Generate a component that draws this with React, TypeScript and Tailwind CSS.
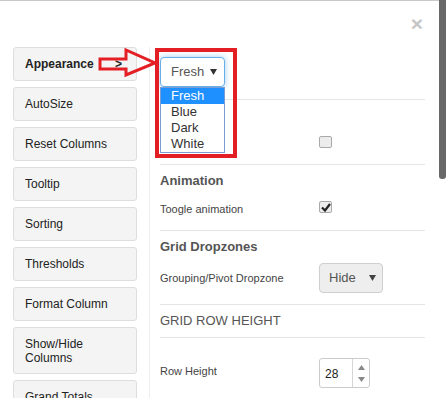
import React from 'react';

const menu = ['AutoSize', 'Reset Columns', 'Tooltip', 'Sorting', 'Thresholds', 'Format Column'];

function Caret({ color = '#333' }: { color?: string }) {
    return (
        <svg width="7" height="6" viewBox="0 0 7 6">
            <path d="M0 0 L7 0 L3.5 6 Z" fill={color} />
        </svg>
    );
}

function Checkbox({ checked }: { checked?: boolean }) {
    return (
        <div className="w-[13px] h-[12px] border border-[#a9a9a9] rounded-[2px] bg-[#ececec] flex items-center justify-center">
            {checked && (
                <svg width="10" height="9" viewBox="0 0 10 9">
                    <path d="M1 4.5 L4 7.5 L9 1" stroke="#222" strokeWidth="2.2" fill="none" />
                </svg>
            )}
        </div>
    );
}

function SideButton({ label, bold, tall }: { label: string; bold?: boolean; tall?: boolean }) {
    return (
        <div
            className={`shrink-0 w-[124px] ${tall ? 'h-[47px]' : 'h-[34px]'} border border-[#dedede] rounded-[3px] bg-[#f4f4f4] pl-[11px] pr-[14px] flex items-center justify-between text-[12px] leading-[14px] text-[#222] ${bold ? 'font-bold' : ''}`}
        >
            <span>{label}</span>
            {bold && <span>&gt;</span>}
        </div>
    );
}

export default function App() {
    return (
        <div className="relative w-[446px] h-[398px] overflow-hidden bg-white font-['Liberation_Sans',Arial,sans-serif] flex flex-row">
            <div className="w-[439px] h-full border-t border-[#c9c9c9] flex flex-col">
                <div className="shrink-0 h-[46px] flex justify-end pr-[16px] pt-[12px]">
                    <span className="text-[21px] leading-none font-bold text-[#c6c6c6]">×</span>
                </div>
                <div className="flex flex-row flex-1 min-h-0 overflow-hidden">
                    <div className="pl-[13px] w-[137px] flex flex-col gap-[6px]">
                        <SideButton label="Appearance" bold />
                        {menu.map((m) => (
                            <SideButton key={m} label={m} />
                        ))}
                        <SideButton label="Show/Hide Columns" tall />
                        <SideButton label="Grand Totals" />
                    </div>
                    <div className="ml-[12px] border-l border-[#eeeeee]" />
                    <div className="ml-[10px] w-[265px] flex flex-col text-[#444]">
                        <div className="shrink-0 relative h-[53px] border-b border-[#e5e5e5] pt-[10px]">
                            <div className="w-[65px] h-[30px] border border-[#66afe9] rounded-[4px] shadow-[0_0_6px_rgba(102,175,233,0.6)] bg-white flex items-center justify-between pl-[10px] pr-[7px] text-[13px] text-[#555]">
                                <span>Fresh</span>
                                <Caret />
                            </div>
                            <div className="absolute left-0 top-[40px] z-10 w-[65px] border border-[#7a9cd3] bg-white text-[13px] leading-[16px] text-[#333]">
                                <div className="h-[16px] pl-[10px] bg-[#1e90ff] text-white">Fresh</div>
                                <div className="h-[16px] pl-[10px]">Blue</div>
                                <div className="h-[16px] pl-[10px]">Dark</div>
                                <div className="h-[16px] pl-[10px]">White</div>
                            </div>
                        </div>
                        <div className="shrink-0 h-[65px] border-b border-[#e5e5e5] pt-[36px] pl-[159px]">
                            <Checkbox />
                        </div>
                        <div className="shrink-0 h-[66px] border-b border-[#e5e5e5] pt-[8px]">
                            <div className="text-[13px] leading-[16px] font-bold text-[#555]">Animation</div>
                            <div className="mt-[10px] h-[20px] flex items-center">
                                <span className="w-[159px] text-[11px]">Toogle animation</span>
                                <div className="-mt-[4px]">
                                    <Checkbox checked />
                                </div>
                            </div>
                        </div>
                        <div className="shrink-0 h-[74px] border-b border-[#e5e5e5] pt-[8px]">
                            <div className="text-[13px] leading-[16px] font-bold text-[#555]">Grid Dropzones</div>
                            <div className="mt-[8px] h-[30px] flex items-center">
                                <span className="w-[159px] text-[11px]">Grouping/Pivot Dropzone</span>
                                <div className="w-[64px] h-[30px] border border-[#cfcfcf] rounded-[4px] bg-[#eeeeee] flex items-center justify-between pl-[9px] pr-[6px] text-[13px] text-[#555]">
                                    <span>Hide</span>
                                    <Caret color="#444" />
                                </div>
                            </div>
                        </div>
                        <div className="shrink-0 h-[33px] border-b border-[#e5e5e5] pt-[8px]">
                            <div className="text-[13px] leading-[16px] font-medium text-[#555]">GRID ROW HEIGHT</div>
                        </div>
                        <div className="shrink-0 pt-[20px] flex items-center">
                            <span className="w-[159px] text-[11px] pb-[3px]">Row Height</span>
                            <div className="w-[51px] h-[30px] border border-[#cccccc] rounded-[3px] bg-white flex flex-row">
                                <div className="w-[33px] pl-[5px] flex items-center pt-[2px] text-[12px] text-[#222] border-r border-[#d5d5d5]">28</div>
                                <div className="flex-1 flex flex-col items-center justify-center gap-[7px]">
                                    <svg width="7" height="5" viewBox="0 0 7 5">
                                        <path d="M0 5 L3.5 0 L7 5 Z" fill="#888" />
                                    </svg>
                                    <svg width="7" height="5" viewBox="0 0 7 5">
                                        <path d="M0 0 L7 0 L3.5 5 Z" fill="#888" />
                                    </svg>
                                </div>
                            </div>
                        </div>
                    </div>
                </div>
            </div>
            <div className="w-[7px] h-full">
                <div className="h-[179px] bg-[#686868] rounded-b-[3px]" />
            </div>

            <div className="absolute left-[155px] top-[48px] w-[82px] h-[110px] border-4 border-[#e31e24] z-20" />
            <svg className="absolute left-[97px] top-[47px] z-20" width="62" height="32" viewBox="97 47 62 32">
                <path
                    d="M100 59 L126 59 L126 50 L155 63 L126 75 L126 69 L100 69 Z"
                    fill="none"
                    stroke="#e31e24"
                    strokeWidth="3"
                    strokeLinejoin="miter"
                />
            </svg>
        </div>
    );
}
